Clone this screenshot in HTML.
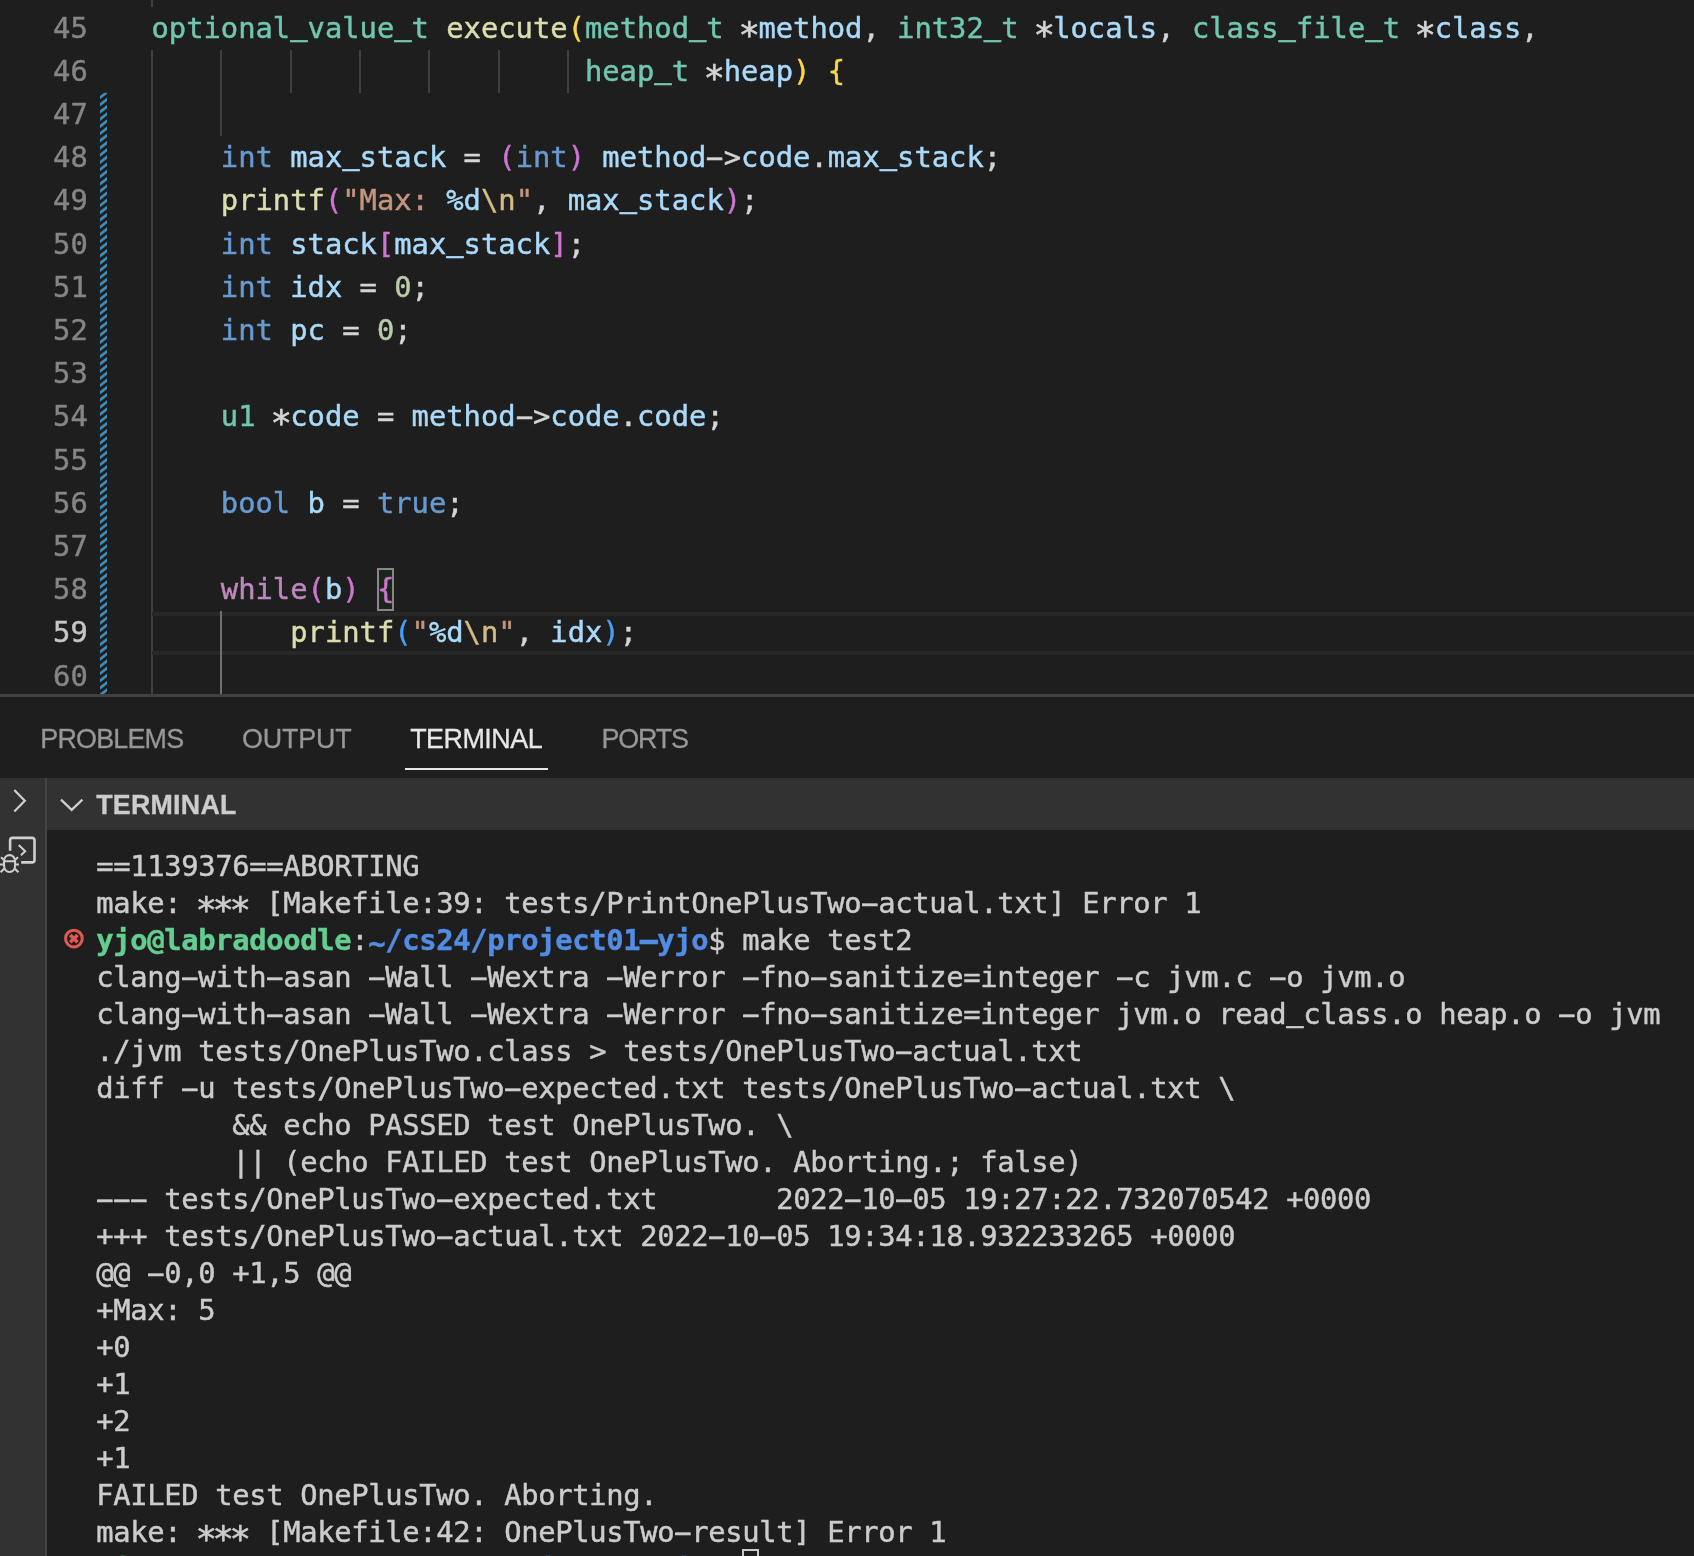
<!DOCTYPE html>
<html><head><meta charset="utf-8"><title>jvm.c</title>
<style>
html,body{margin:0;padding:0}
body{width:1694px;height:1556px;overflow:hidden;background:#1e1e1e;position:relative;font-family:"DejaVu Sans Mono","Liberation Mono",monospace}
#ed,#panel{will-change:transform}
.cl,.ln,.tr{-webkit-text-stroke:0.45px currentColor}
#ed{position:absolute;left:0;top:0;width:1694px;height:694px;overflow:hidden;background:#1e1e1e}
.ln{position:absolute;left:0;width:87.8px;text-align:right;color:#858585;font-size:28.8px;height:43.2px;line-height:43.2px;white-space:pre}
.ln.cur{color:#c6c6c6}
.cl{position:absolute;left:151.5px;font-size:28.8px;height:43.2px;line-height:43.2px;white-space:pre;color:#d4d4d4}
.t{color:#71c6b1}.f{color:#dcdcaf}.v{color:#aadafa}.k{color:#679ad1}.c{color:#bc89bd}.s{color:#c5947c}.e{color:#d2bb85}.n{color:#bacdab}.w{color:#d4d4d4}
.b1{color:#f9d849}.b2{color:#cc76d1}.b3{color:#4a9df8}
.g{position:absolute;width:2px;background:#404040}
.g.a{background:#707070}
#curline{position:absolute;left:152px;top:612px;width:1542px;height:43px;box-sizing:border-box;border-top:4px solid #282828;border-bottom:4px solid #282828}
#bm{position:absolute;left:377px;top:568.2px;width:16.6px;height:43.2px;box-sizing:border-box;border:2px solid #888;background:#1b261b}
#pborder{position:absolute;left:0;top:694px;width:1694px;height:2.5px;background:#414141}
#panel{position:absolute;left:0;top:0;width:1694px;height:1556px}
.tab{position:absolute;top:697px;height:81px;line-height:84.6px;-webkit-text-stroke:0.3px currentColor;font-family:"Liberation Sans",sans-serif;font-size:26.9px;color:#979797;white-space:pre}
.tab.on{color:#e7e7e7}
#ul{position:absolute;left:405.2px;top:767.5px;width:142.8px;height:2.6px;background:#e7e7e7}
#side{position:absolute;left:0;top:777.7px;width:45.3px;height:780px;background:#323232}
#sideb{position:absolute;left:45.2px;top:777.7px;width:2px;height:780px;background:#444}
#hdr{position:absolute;left:47.2px;top:777.7px;width:1647px;height:52px;background:#323232}
#hdrt{position:absolute;left:96.2px;top:777.7px;height:52px;line-height:55.4px;font-family:"Liberation Sans",sans-serif;font-weight:bold;font-size:26.8px;letter-spacing:0.25px;-webkit-text-stroke:0.3px currentColor;color:#cccccc;white-space:pre}
.tr{position:absolute;left:96.3px;height:37px;line-height:37px;font-size:28.8px;letter-spacing:-0.34px;color:#cccccc;white-space:pre}
.tg{color:#64ce91;font-weight:bold}.tb{color:#528ce3;font-weight:bold}
i{font-style:normal;display:inline-block}
.as{transform:translate(-0.5px,6.4px) scale(1.24)}
.hy{transform:scaleX(2)}
.us{transform:translateY(-9.9px) scaleY(1.4)}
.ti{transform:translateY(3px)}
svg{position:absolute;overflow:visible}
</style></head><body>
<div id="ed">

<div class="ln" style="top:6.6px">45</div>
<div class="ln" style="top:49.8px">46</div>
<div class="ln" style="top:93.0px">47</div>
<div class="ln" style="top:136.2px">48</div>
<div class="ln" style="top:179.4px">49</div>
<div class="ln" style="top:222.6px">50</div>
<div class="ln" style="top:265.8px">51</div>
<div class="ln" style="top:309.0px">52</div>
<div class="ln" style="top:352.2px">53</div>
<div class="ln" style="top:395.4px">54</div>
<div class="ln" style="top:438.6px">55</div>
<div class="ln" style="top:481.8px">56</div>
<div class="ln" style="top:525.0px">57</div>
<div class="ln" style="top:568.2px">58</div>
<div class="ln cur" style="top:611.4px">59</div>
<div class="ln" style="top:654.6px">60</div>
<div class="g" style="left:151px;top:49.8px;height:648.0px"></div>
<div class="g" style="left:151px;top:0;height:6.6px"></div>
<div class="g" style="left:220px;top:49.8px;height:86.4px"></div>
<div class="g" style="left:290px;top:49.8px;height:43.2px"></div>
<div class="g" style="left:359px;top:49.8px;height:43.2px"></div>
<div class="g" style="left:428px;top:49.8px;height:43.2px"></div>
<div class="g" style="left:498px;top:49.8px;height:43.2px"></div>
<div class="g" style="left:567px;top:49.8px;height:43.2px"></div>
<div id="curline"></div>
<div class="g a" style="left:220px;top:611.4px;height:86.4px"></div>
<svg style="left:0;top:0" width="120" height="694" viewBox="0 0 120 694"><defs><clipPath id="dc"><rect x="100" y="92.75" width="7.2" height="602"/></clipPath></defs><path clip-path="url(#dc)" fill="#3f8cba" d="M100 88.70L107.2 83.10V86.57L100 92.17ZM100 95.90L107.2 90.30V93.77L100 99.37ZM100 103.10L107.2 97.50V100.97L100 106.57ZM100 110.30L107.2 104.70V108.17L100 113.77ZM100 117.50L107.2 111.90V115.37L100 120.97ZM100 124.70L107.2 119.10V122.57L100 128.17ZM100 131.90L107.2 126.30V129.77L100 135.37ZM100 139.10L107.2 133.50V136.97L100 142.57ZM100 146.30L107.2 140.70V144.17L100 149.77ZM100 153.50L107.2 147.90V151.37L100 156.97ZM100 160.70L107.2 155.10V158.57L100 164.17ZM100 167.90L107.2 162.30V165.77L100 171.37ZM100 175.10L107.2 169.50V172.97L100 178.57ZM100 182.30L107.2 176.70V180.17L100 185.77ZM100 189.50L107.2 183.90V187.37L100 192.97ZM100 196.70L107.2 191.10V194.57L100 200.17ZM100 203.90L107.2 198.30V201.77L100 207.37ZM100 211.10L107.2 205.50V208.97L100 214.57ZM100 218.30L107.2 212.70V216.17L100 221.77ZM100 225.50L107.2 219.90V223.37L100 228.97ZM100 232.70L107.2 227.10V230.57L100 236.17ZM100 239.90L107.2 234.30V237.77L100 243.37ZM100 247.10L107.2 241.50V244.97L100 250.57ZM100 254.30L107.2 248.70V252.17L100 257.77ZM100 261.50L107.2 255.90V259.37L100 264.97ZM100 268.70L107.2 263.10V266.57L100 272.17ZM100 275.90L107.2 270.30V273.77L100 279.37ZM100 283.10L107.2 277.50V280.97L100 286.57ZM100 290.30L107.2 284.70V288.17L100 293.77ZM100 297.50L107.2 291.90V295.37L100 300.97ZM100 304.70L107.2 299.10V302.57L100 308.17ZM100 311.90L107.2 306.30V309.77L100 315.37ZM100 319.10L107.2 313.50V316.97L100 322.57ZM100 326.30L107.2 320.70V324.17L100 329.77ZM100 333.50L107.2 327.90V331.37L100 336.97ZM100 340.70L107.2 335.10V338.57L100 344.17ZM100 347.90L107.2 342.30V345.77L100 351.37ZM100 355.10L107.2 349.50V352.97L100 358.57ZM100 362.30L107.2 356.70V360.17L100 365.77ZM100 369.50L107.2 363.90V367.37L100 372.97ZM100 376.70L107.2 371.10V374.57L100 380.17ZM100 383.90L107.2 378.30V381.77L100 387.37ZM100 391.10L107.2 385.50V388.97L100 394.57ZM100 398.30L107.2 392.70V396.17L100 401.77ZM100 405.50L107.2 399.90V403.37L100 408.97ZM100 412.70L107.2 407.10V410.57L100 416.17ZM100 419.90L107.2 414.30V417.77L100 423.37ZM100 427.10L107.2 421.50V424.97L100 430.57ZM100 434.30L107.2 428.70V432.17L100 437.77ZM100 441.50L107.2 435.90V439.37L100 444.97ZM100 448.70L107.2 443.10V446.57L100 452.17ZM100 455.90L107.2 450.30V453.77L100 459.37ZM100 463.10L107.2 457.50V460.97L100 466.57ZM100 470.30L107.2 464.70V468.17L100 473.77ZM100 477.50L107.2 471.90V475.37L100 480.97ZM100 484.70L107.2 479.10V482.57L100 488.17ZM100 491.90L107.2 486.30V489.77L100 495.37ZM100 499.10L107.2 493.50V496.97L100 502.57ZM100 506.30L107.2 500.70V504.17L100 509.77ZM100 513.50L107.2 507.90V511.37L100 516.97ZM100 520.70L107.2 515.10V518.57L100 524.17ZM100 527.90L107.2 522.30V525.77L100 531.37ZM100 535.10L107.2 529.50V532.97L100 538.57ZM100 542.30L107.2 536.70V540.17L100 545.77ZM100 549.50L107.2 543.90V547.37L100 552.97ZM100 556.70L107.2 551.10V554.57L100 560.17ZM100 563.90L107.2 558.30V561.77L100 567.37ZM100 571.10L107.2 565.50V568.97L100 574.57ZM100 578.30L107.2 572.70V576.17L100 581.77ZM100 585.50L107.2 579.90V583.37L100 588.97ZM100 592.70L107.2 587.10V590.57L100 596.17ZM100 599.90L107.2 594.30V597.77L100 603.37ZM100 607.10L107.2 601.50V604.97L100 610.57ZM100 614.30L107.2 608.70V612.17L100 617.77ZM100 621.50L107.2 615.90V619.37L100 624.97ZM100 628.70L107.2 623.10V626.57L100 632.17ZM100 635.90L107.2 630.30V633.77L100 639.37ZM100 643.10L107.2 637.50V640.97L100 646.57ZM100 650.30L107.2 644.70V648.17L100 653.77ZM100 657.50L107.2 651.90V655.37L100 660.97ZM100 664.70L107.2 659.10V662.57L100 668.17ZM100 671.90L107.2 666.30V669.77L100 675.37ZM100 679.10L107.2 673.50V676.97L100 682.57ZM100 686.30L107.2 680.70V684.17L100 689.77ZM100 693.50L107.2 687.90V691.37L100 696.97Z"/></svg>
<div id="bm"></div>
<div class="cl" style="top:6.6px"><span class="t">optional<i class="us">_</i>value<i class="us">_</i>t</span><span class="w"> </span><span class="f">execute</span><span class="b1">(</span><span class="t">method<i class="us">_</i>t</span><span class="w"> <i class="as">*</i></span><span class="v">method</span><span class="w">, </span><span class="t">int32<i class="us">_</i>t</span><span class="w"> <i class="as">*</i></span><span class="v">locals</span><span class="w">, </span><span class="t">class<i class="us">_</i>file<i class="us">_</i>t</span><span class="w"> <i class="as">*</i></span><span class="v">class</span><span class="w">,</span></div>
<div class="cl" style="top:49.8px"><span class="w">                         </span><span class="t">heap<i class="us">_</i>t</span><span class="w"> <i class="as">*</i></span><span class="v">heap</span><span class="b1">)</span><span class="w"> </span><span class="b1">{</span></div>
<div class="cl" style="top:136.2px"><span class="w">    </span><span class="k">int</span><span class="w"> </span><span class="v">max<i class="us">_</i>stack</span><span class="w"> = </span><span class="b2">(</span><span class="k">int</span><span class="b2">)</span><span class="w"> </span><span class="v">method</span><span class="w"><i class="hy">-</i>&gt;</span><span class="v">code</span><span class="w">.</span><span class="v">max<i class="us">_</i>stack</span><span class="w">;</span></div>
<div class="cl" style="top:179.4px"><span class="w">    </span><span class="f">printf</span><span class="b2">(</span><span class="s">&quot;Max: </span><span class="v">%d</span><span class="e">\n</span><span class="s">&quot;</span><span class="w">, </span><span class="v">max<i class="us">_</i>stack</span><span class="b2">)</span><span class="w">;</span></div>
<div class="cl" style="top:222.6px"><span class="w">    </span><span class="k">int</span><span class="w"> </span><span class="v">stack</span><span class="b2">[</span><span class="v">max<i class="us">_</i>stack</span><span class="b2">]</span><span class="w">;</span></div>
<div class="cl" style="top:265.8px"><span class="w">    </span><span class="k">int</span><span class="w"> </span><span class="v">idx</span><span class="w"> = </span><span class="n">0</span><span class="w">;</span></div>
<div class="cl" style="top:309.0px"><span class="w">    </span><span class="k">int</span><span class="w"> </span><span class="v">pc</span><span class="w"> = </span><span class="n">0</span><span class="w">;</span></div>
<div class="cl" style="top:395.4px"><span class="w">    </span><span class="t">u1</span><span class="w"> <i class="as">*</i></span><span class="v">code</span><span class="w"> = </span><span class="v">method</span><span class="w"><i class="hy">-</i>&gt;</span><span class="v">code</span><span class="w">.</span><span class="v">code</span><span class="w">;</span></div>
<div class="cl" style="top:481.8px"><span class="w">    </span><span class="k">bool</span><span class="w"> </span><span class="v">b</span><span class="w"> = </span><span class="k">true</span><span class="w">;</span></div>
<div class="cl" style="top:568.2px"><span class="w">    </span><span class="c">while</span><span class="b2">(</span><span class="v">b</span><span class="b2">)</span><span class="w"> </span><span class="b2">{</span></div>
<div class="cl" style="top:611.4px"><span class="w">        </span><span class="f">printf</span><span class="b3">(</span><span class="s">&quot;</span><span class="v">%d</span><span class="e">\n</span><span class="s">&quot;</span><span class="w">, </span><span class="v">idx</span><span class="b3">)</span><span class="w">;</span></div>
</div>
<div id="pborder"></div>
<div id="panel">
<div class="tab" style="left:40.3px;letter-spacing:-0.8px">PROBLEMS</div>
<div class="tab" style="left:242px;letter-spacing:-0.15px">OUTPUT</div>
<div class="tab on" style="left:410.2px;letter-spacing:-0.5px">TERMINAL</div>
<div class="tab" style="left:601.5px;letter-spacing:-1.15px">PORTS</div>
<div id="ul"></div>
<div id="side"></div><div id="sideb"></div><div id="hdr"></div>
<div id="hdrt">TERMINAL</div>
<svg style="left:0;top:0" width="1694" height="1556" viewBox="0 0 1694 1556">
<path d="M14.3 790 L24.8 800.8 L14.3 811.6" fill="none" stroke="#cfcfcf" stroke-width="2.2"/>
<path d="M61 799.6 L71.7 809.9 L82.4 799.6" fill="none" stroke="#cfcfcf" stroke-width="2.2"/>
<g transform="translate(0 826)" fill="none" stroke="#cfcfcf">
<path d="M10.1 24.7 V14.4 a2.5 2.5 0 0 1 2.5 -2.5 H32 a2.5 2.5 0 0 1 2.5 2.5 V33.9 a2.5 2.5 0 0 1 -2.5 2.5 H21.2" stroke-width="2.6"/>
<path d="M18.7 19 L25.2 25.2 L20.9 29.3" stroke-width="2"/>
<g stroke-width="2.1"><path d="M4 35.6 C4 26.9 15.1 26.9 15.1 35.6 V39.3 C15.1 48.3 4 48.3 4 39.3 Z"/><path d="M4.1 35.3 H14.9 M15.3 33.6 L18 31.3 M3.7 33.6 L1 31.3 M15.2 38.5 H18.9 M3.8 38.5 H0 M14.9 42.7 L18.4 46.2 M4.1 42.7 L0.6 46.2"/></g>
</g>
<g transform="translate(73.9 938.6)" fill="none" stroke="#df5953"><circle cx="0" cy="0" r="8.35" stroke-width="3.1"/><path d="M-3.7 -3.7 L3.7 3.7 M3.7 -3.7 L-3.7 3.7" stroke-width="3.6"/></g>
</svg>
<div class="tr" style="top:847.5px">==1139376==ABORTING</div>
<div class="tr" style="top:884.5px">make: <i class="as">*</i><i class="as">*</i><i class="as">*</i> [Makefile:39: tests/PrintOnePlusTwo<i class="hy">-</i>actual.txt] Error 1</div>
<div class="tr" style="top:921.5px"><span class="tg">yjo@labradoodle</span>:<span class="tb"><i class="ti">~</i>/cs24/project01<i class="hy">-</i>yjo</span>$ make test2</div>
<div class="tr" style="top:958.5px">clang<i class="hy">-</i>with<i class="hy">-</i>asan <i class="hy">-</i>Wall <i class="hy">-</i>Wextra <i class="hy">-</i>Werror <i class="hy">-</i>fno<i class="hy">-</i>sanitize=integer <i class="hy">-</i>c jvm.c <i class="hy">-</i>o jvm.o</div>
<div class="tr" style="top:995.5px">clang<i class="hy">-</i>with<i class="hy">-</i>asan <i class="hy">-</i>Wall <i class="hy">-</i>Wextra <i class="hy">-</i>Werror <i class="hy">-</i>fno<i class="hy">-</i>sanitize=integer jvm.o read<i class="us">_</i>class.o heap.o <i class="hy">-</i>o jvm</div>
<div class="tr" style="top:1032.5px">./jvm tests/OnePlusTwo.class &gt; tests/OnePlusTwo<i class="hy">-</i>actual.txt</div>
<div class="tr" style="top:1069.5px">diff <i class="hy">-</i>u tests/OnePlusTwo<i class="hy">-</i>expected.txt tests/OnePlusTwo<i class="hy">-</i>actual.txt \</div>
<div class="tr" style="top:1106.5px">        &amp;&amp; echo PASSED test OnePlusTwo. \</div>
<div class="tr" style="top:1143.5px">        || (echo FAILED test OnePlusTwo. Aborting.; false)</div>
<div class="tr" style="top:1180.5px"><i class="hy">-</i><i class="hy">-</i><i class="hy">-</i> tests/OnePlusTwo<i class="hy">-</i>expected.txt       2022<i class="hy">-</i>10<i class="hy">-</i>05 19:27:22.732070542 +0000</div>
<div class="tr" style="top:1217.5px">+++ tests/OnePlusTwo<i class="hy">-</i>actual.txt 2022<i class="hy">-</i>10<i class="hy">-</i>05 19:34:18.932233265 +0000</div>
<div class="tr" style="top:1254.5px">@@ <i class="hy">-</i>0,0 +1,5 @@</div>
<div class="tr" style="top:1291.5px">+Max: 5</div>
<div class="tr" style="top:1328.5px">+0</div>
<div class="tr" style="top:1365.5px">+1</div>
<div class="tr" style="top:1402.5px">+2</div>
<div class="tr" style="top:1439.5px">+1</div>
<div class="tr" style="top:1476.5px">FAILED test OnePlusTwo. Aborting.</div>
<div class="tr" style="top:1513.5px">make: <i class="as">*</i><i class="as">*</i><i class="as">*</i> [Makefile:42: OnePlusTwo<i class="hy">-</i>result] Error 1</div>
<div class="tr" style="top:1550.5px"><span class="tg">yjo@labradoodle</span>:<span class="tb"><i class="ti">~</i>/cs24/project01<i class="hy">-</i>yjo</span>$ </div>
<div style="position:absolute;left:741.6px;top:1548.8px;width:17.4px;height:35px;border:2.4px solid #ccc;box-sizing:border-box"></div>
</div></body></html>
